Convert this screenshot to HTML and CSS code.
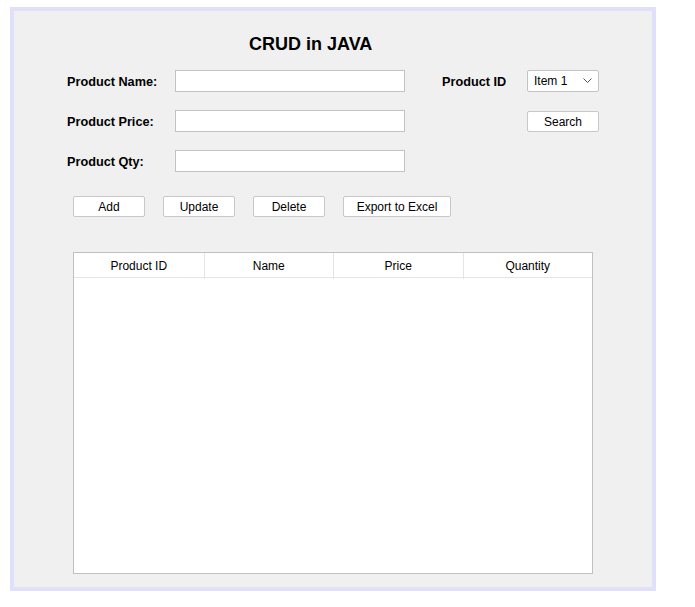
FILE: index.html
```html
<!DOCTYPE html>
<html>
<head>
<meta charset="utf-8">
<link rel="stylesheet" href="styles.css">
</head>
<body>
<div class="frame">
  <h1 class="title">CRUD in JAVA</h1>
  <div class="form">
    <label class="lbl">Product Name:</label>
    <div class="field"></div>
    <span></span>
    <label class="lbl">Product ID</label>
    <div class="combo"><span>Item 1</span>
      <svg class="chev" width="9" height="6" viewBox="0 0 9 6"><path d="M0.5 0.5 L4.5 4.5 L8.5 0.5" fill="none" stroke="#555" stroke-width="1"/></svg>
    </div>

    <label class="lbl">Product Price:</label>
    <div class="field"></div>
    <span></span>
    <span></span>
    <div class="btn">Search</div>

    <label class="lbl">Product Qty:</label>
    <div class="field"></div>
  </div>
  <div class="actions">
    <div class="btn w72">Add</div>
    <div class="btn w72">Update</div>
    <div class="btn w72">Delete</div>
    <div class="btn w108">Export to Excel</div>
  </div>
  <div class="table">
    <div class="thead">
      <div class="th">Product ID</div>
      <div class="th">Name</div>
      <div class="th">Price</div>
      <div class="th">Quantity</div>
    </div>
    <div class="tbody"></div>
  </div>
</div>
</body>
</html>
```
FILE: styles.css
```css
html, body {
  margin: 0;
  padding: 0;
  background: #ffffff;
}
body {
  font-family: "Liberation Sans", Arial, sans-serif;
  font-size: 12px;
  color: #000;
}
.frame {
  margin: 7px 0 0 10px;
  width: 638px;
  height: 576px;
  border: 4px solid #e0e0fa;
  background: #f0f0f0;
  display: flex;
  flex-direction: column;
}
.title {
  margin: 22px 0 0 235px;
  font-size: 18px;
  font-weight: bold;
  line-height: 22px;
  height: 22px;
}
.form {
  margin: 15px 0 0 53px;
  display: grid;
  grid-template-columns: 108px 230px 37px 85px 72px;
  grid-auto-rows: 22px;
  row-gap: 18px;
  align-items: center;
}
.lbl {
  font-weight: bold;
  font-size: 12.7px;
  line-height: 22px;
  padding-top: 1px;
}
.field {
  height: 20px;
  background: #fff;
  border: 1px solid #c3c3c3;
}
.combo {
  height: 20px;
  background: #fff;
  border: 1px solid #c3c3c3;
  border-radius: 2px;
  display: flex;
  align-items: center;
  justify-content: space-between;
  padding: 0 6px 0 6px;
  font-size: 12px;
}
.chev {
  display: block;
}
.btn {
  height: 19px;
  line-height: 20px;
  background: #fff;
  border: 1px solid #c8c8c8;
  border-radius: 2px;
  text-align: center;
  font-size: 12px;
}
.actions {
  margin: 24px 0 0 59px;
  display: flex;
  gap: 18px;
}
.w72 { width: 70px; }
.w108 { width: 106px; }
.table {
  margin: 35px 0 0 59px;
  width: 518px;
  height: 320px;
  border: 1px solid #c0c0c0;
  background: #fff;
  display: flex;
  flex-direction: column;
}
.thead {
  display: grid;
  grid-template-columns: repeat(4, 1fr);
  height: 24px;
  border-bottom: 1px solid #e4e4e4;
}
.th {
  text-align: center;
  line-height: 26px;
  font-size: 12px;
  border-left: 1px solid #e4e4e4;
}
.th:first-child {
  border-left: none;
}
.tbody {
  flex: 1;
}
```
